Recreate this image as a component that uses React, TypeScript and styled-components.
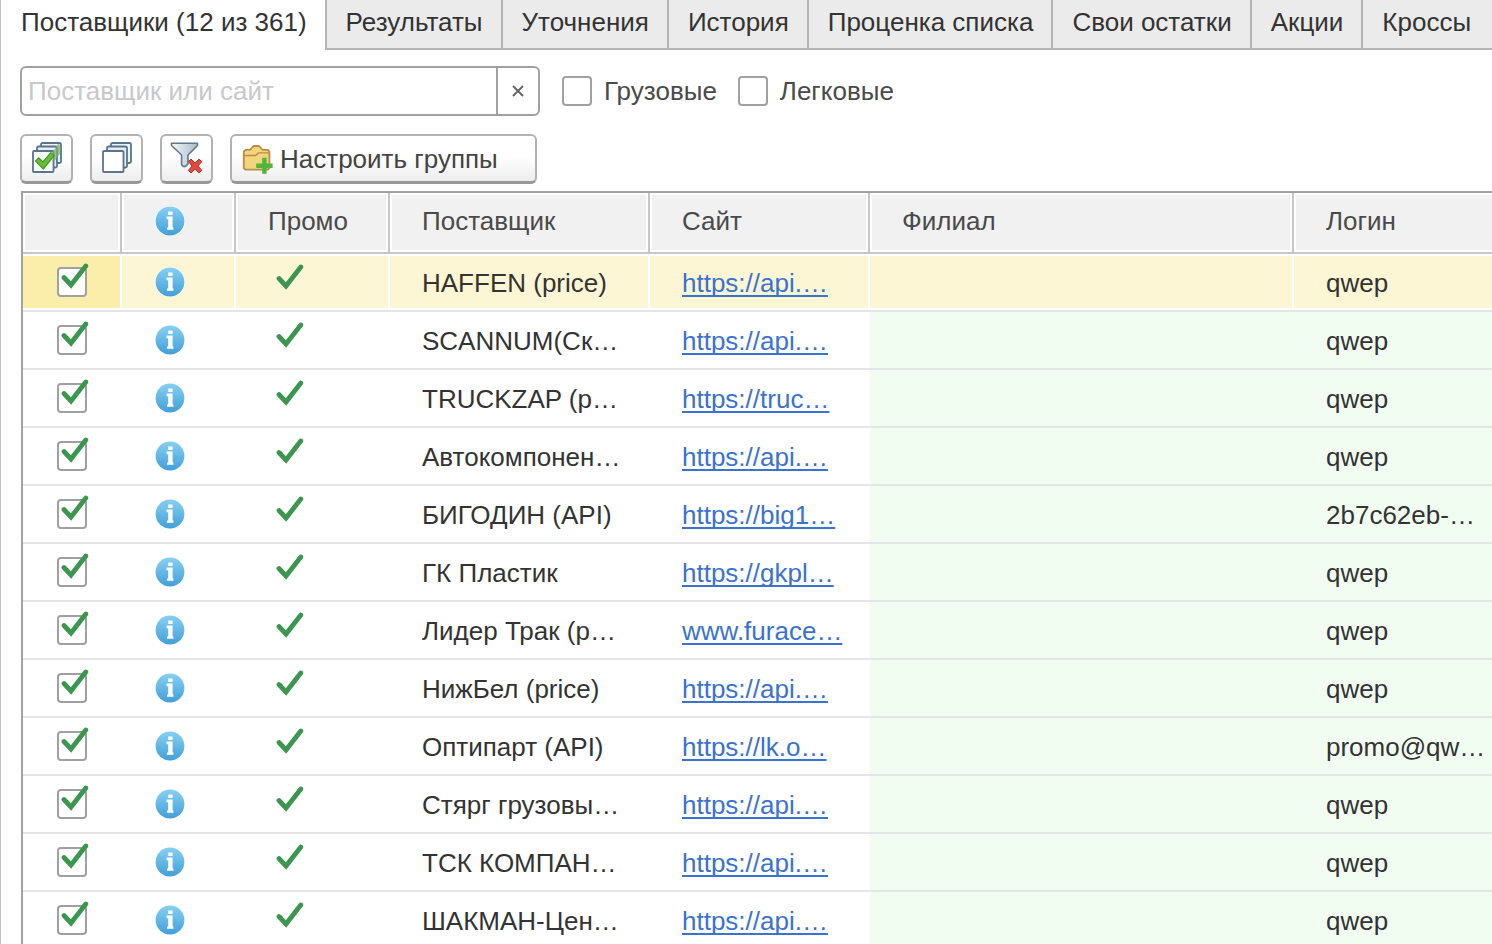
import React, { useState } from "react";
import styled, { createGlobalStyle, css } from "styled-components";

const GlobalStyle = createGlobalStyle`
  *, *::before, *::after { box-sizing: border-box; }
  body {
    margin: 0;
    height: 100vh;
    overflow: hidden;
    background: #fff;
    color: #333;
    font: 26px/32px "Liberation Sans", Arial, sans-serif;
  }
  button, input { font: inherit; color: inherit; }
`;

const Page = styled.main`
  height: 100vh;
  overflow: hidden;
  border-left: 1px solid #c4c4c4;
`;

const Tabs = styled.nav`
  display: flex;
  height: 50px;
  overflow: hidden;
`;

const Tab = styled.button<{ $active: boolean }>`
  flex: none;
  height: 50px;
  padding: 0 18px 4px 19px;
  border: 0 solid #b4b4b4;
  white-space: nowrap;
  text-align: left;
  background: #ebebeb;
  border-width: 0 0 2px 2px;
  &:last-child { flex: 1 0 auto; }
  ${(p) =>
    p.$active &&
    css`
      padding: 0 18px 6px 20px;
      background: #fff;
      border-width: 0;
    `}
`;

const Filters = styled.div`
  display: flex;
  align-items: center;
  padding: 16px 0 0 19px;
`;

const SearchBox = styled.div`
  display: flex;
  width: 520px;
  height: 50px;
  margin-right: 22px;
  border: 2px solid #a0a0a0;
  border-radius: 6px;
  background: #fff;
  overflow: hidden;
`;

const SearchInput = styled.input`
  flex: 1;
  min-width: 0;
  border: 0;
  padding: 0 6px;
  background: none;
  outline: none;
  &::placeholder { color: #c8c8cc; opacity: 1; }
`;

const ClearButton = styled.button`
  display: flex;
  align-items: center;
  justify-content: center;
  width: 42px;
  padding: 0;
  border: 0;
  border-left: 2px solid #a0a0a0;
  background: none;
`;

const CheckLabel = styled.label`
  display: flex;
  align-items: center;
  gap: 12px;
  margin-right: 21px;
  color: #4a4a4a;
`;

const Box = styled.input`
  appearance: none;
  display: block;
  width: 30px;
  height: 30px;
  margin: 0;
  border: 2px solid #a0a0a0;
  border-radius: 4px;
  background: #fff;
`;

const Toolbar = styled.div`
  display: flex;
  gap: 17px;
  padding: 18px 0 7px 19px;
`;

const ToolButton = styled.button<{ $wide?: boolean }>`
  display: flex;
  align-items: center;
  justify-content: ${(p) => (p.$wide ? "flex-start" : "center")};
  gap: 7px;
  width: ${(p) => (p.$wide ? 307 : 53)}px;
  height: 50px;
  padding: ${(p) => (p.$wide ? "0 10px" : "0 0 2px")};
  border: 2px solid #b2b2b2;
  border-bottom: 3px solid #989898;
  border-radius: 6px;
  background: linear-gradient(#fff 45%, #ededed);
  color: #444;
`;

const GridFrame = styled.div`
  margin-left: 20px;
  border: 2px solid #a2a2a2;
  border-width: 2px 0 0 2px;
`;

const Grid = styled.table`
  width: 100%;
  table-layout: fixed;
  border-collapse: separate;
  border-spacing: 0;
`;

const Col = styled.col<{ $width?: number }>`
  width: ${(p) => (p.$width ? `${p.$width}px` : "auto")};
`;

const HeadCell = styled.th<{ $center?: boolean }>`
  height: 61px;
  padding: ${(p) => (p.$center ? "0 0 4px" : "0 0 4px 32px")};
  border: 0 solid #c6c6c6;
  border-width: 0 2px 2px 0;
  box-shadow: inset 0 0 0 2px #fff;
  background: #f1f1f1;
  color: #4a4a4a;
  font-weight: normal;
  text-align: left;
  &:last-child {
    border-right-width: 0;
    box-shadow: inset 2px 2px #fff, inset 0 -2px #fff;
  }
`;

const Cell = styled.td<{ $tint?: boolean; $center?: boolean }>`
  height: 58px;
  padding: ${(p) => (p.$center ? "0" : "2px 0 0 32px")};
  border-bottom: 2px solid #e3e5e7;
  background: ${(p) => (p.$tint ? "#f2fdf1" : "#fff")};
  white-space: nowrap;
  overflow: hidden;
`;

const Row = styled.tr<{ $selected: boolean }>`
  ${(p) =>
    p.$selected &&
    css`
      ${Cell} {
        background: #fdf6d4;
        box-shadow: inset -2px 2px #fff, inset 0 -2px #fff;
      }
      ${Cell}:first-child { background: #faeeaa; }
      ${Cell}:last-child { box-shadow: inset 0 2px #fff, inset 0 -2px #fff; }
    `}
`;

const SiteLink = styled.a`
  color: #3a72d0;
  text-decoration: underline;
  text-decoration-thickness: 2px;
  text-underline-offset: 3px;
  text-decoration-skip-ink: none;
`;

const RowCheck = styled.label`
  position: relative;
  display: block;
  width: 30px;
  margin-left: 34px;
  svg {
    position: absolute;
    left: 4px;
    top: -4px;
    pointer-events: none;
  }
`;

const Mark = styled.span`
  display: block;
  padding: 0 0 10px 40px;
  svg { display: block; }
`;

const InfoMark = styled.span`
  display: block;
  padding-left: 33px;
  svg { display: block; }
`;

const Tick = () => (
  <svg width="28" height="27" viewBox="0 0 28 27" aria-hidden="true">
    <path d="M3 14.5 10 22 24.8 3" fill="none" stroke="#3d9650" strokeWidth="4.8" strokeLinecap="round" />
  </svg>
);

const InfoIcon = () => (
  <svg width="30" height="30" viewBox="0 0 30 30" aria-hidden="true">
    <defs>
      <linearGradient id="info" x1="0" y1="0" x2="0" y2="1">
        <stop offset="0" stopColor="#86d0f2" />
        <stop offset="1" stopColor="#429fd8" />
      </linearGradient>
    </defs>
    <circle cx="15" cy="15" r="15" fill="#fff" />
    <circle cx="15" cy="15" r="14.4" fill="url(#info)" />
    <path d="M13.2 5.5h4.4v3.6h-4.4zM11.6 10.6h6v10.8h.8v2.3h-6.400v-2.3h1.200v-8.100h-1.600z" fill="#fff" />
  </svg>
);

const Sheets = () => (
  <g stroke="#58758c" strokeWidth="1.8">
    <rect x="9" y="1" width="20" height="20" rx="1.5" fill="#eef3f6" />
    <rect x="5" y="4.5" width="20" height="21" rx="1.5" fill="#e6edf1" />
    <rect x="1" y="9" width="20.5" height="21" rx="1" fill="#fff" />
  </g>
);

const CheckAllIcon = () => (
  <svg width="30" height="31" viewBox="0 0 30 31" aria-hidden="true">
    <Sheets />
    <path d="M20 11 26 2l2.5 1v8L22 20z" fill="#7fae72" opacity=".75" />
    <path d="m3.5 19 3.4-3.2 4 4.2 8-9.4 3.4 2.8-11 13.6z" fill="#67bd35" stroke="#439b24" strokeWidth="1.2" strokeLinejoin="round" />
  </svg>
);

const UncheckAllIcon = () => (
  <svg width="30" height="31" viewBox="0 0 30 31" aria-hidden="true">
    <Sheets />
  </svg>
);

const ClearFilterIcon = () => (
  <svg width="33" height="32" viewBox="0 0 33 32" aria-hidden="true">
    <defs>
      <linearGradient id="funnel" x1="0" y1="0" x2="1" y2="0">
        <stop offset="0" stopColor="#f5f8fa" />
        <stop offset="1" stopColor="#a9bbc9" />
      </linearGradient>
    </defs>
    <path d="M1.5 1.2h26v2.3L18 13v9l-2.4 2.4h-2.4l-1.6-1.6V13L1.5 3.5z" fill="url(#funnel)" stroke="#60798c" strokeWidth="1.6" strokeLinejoin="round" />
    <path d="m18.4 19.6 2.6-2.4 4 3.6 4-3.6 2.8 2.4-3.8 4.4 3.8 4.4-2.8 2.6-4-3.8-4 3.8-2.6-2.6 3.6-4.4z" fill="#e04a3e" stroke="#b72d27" strokeWidth="1" strokeLinejoin="round" />
  </svg>
);

const FolderIcon = () => (
  <svg width="31" height="30" viewBox="0 0 31 30" aria-hidden="true">
    <path d="M1.8 11V7.5L3.6 5.8H8L11.5 2H17l3.6 3.8h5.2l1.6 1.8V24l-1.6 1.6H3.4L1.8 24z" fill="#f5d47e" stroke="#b98d47" strokeWidth="1.8" strokeLinejoin="round" />
    <path d="M2.5 11.5h11l3-2.6H27" fill="none" stroke="#b98d47" strokeWidth="1.4" />
    <path d="M20.2 13.8h4.4v5.8h6V24h-6v5.8h-4.4V24h-6v-4.4h6z" fill="#50b63a" />
  </svg>
);

const CrossIcon = () => (
  <svg width="12" height="12" viewBox="0 0 12 12" aria-hidden="true">
    <path d="M1 1l10 10M11 1 1 11" stroke="#666" strokeWidth="2" />
  </svg>
);

const tabs = [
  "Поставщики (12 из 361)",
  "Результаты",
  "Уточнения",
  "История",
  "Проценка списка",
  "Свои остатки",
  "Акции",
  "Кроссы",
];

const suppliers = [
  { name: "HAFFEN (price)", site: "https://api.…", login: "qwep" },
  { name: "SCANNUM(Ск…", site: "https://api.…", login: "qwep" },
  { name: "TRUCKZAP (p…", site: "https://truc…", login: "qwep" },
  { name: "Автокомпонен…", site: "https://api.…", login: "qwep" },
  { name: "БИГОДИН (API)", site: "https://big1…", login: "2b7c62eb-…" },
  { name: "ГК Пластик", site: "https://gkpl…", login: "qwep" },
  { name: "Лидер Трак (p…", site: "www.furace…", login: "qwep" },
  { name: "НижБел (price)", site: "https://api.…", login: "qwep" },
  { name: "Оптипарт (API)", site: "https://lk.o…", login: "promo@qw…" },
  { name: "Стярг грузовы…", site: "https://api.…", login: "qwep" },
  { name: "ТСК КОМПАН…", site: "https://api.…", login: "qwep" },
  { name: "ШАКМАН-Цен…", site: "https://api.…", login: "qwep" },
];

export default function App() {
  const [activeTab, setActiveTab] = useState(0);
  const [selected, setSelected] = useState(0);
  const [query, setQuery] = useState("");
  const [checked, setChecked] = useState(() => suppliers.map(() => true));

  const setAll = (value: boolean) => setChecked(suppliers.map(() => value));
  const toggle = (index: number) =>
    setChecked((prev) => prev.map((value, i) => (i === index ? !value : value)));

  return (
    <>
      <GlobalStyle />
      <Page>
        <Tabs>
          {tabs.map((title, i) => (
            <Tab key={title} type="button" $active={i === activeTab} onClick={() => setActiveTab(i)}>
              {title}
            </Tab>
          ))}
        </Tabs>

        <Filters>
          <SearchBox>
            <SearchInput
              type="text"
              aria-label="Поставщик или сайт"
              placeholder="Поставщик или сайт"
              value={query}
              onChange={(e) => setQuery(e.target.value)}
            />
            <ClearButton type="button" aria-label="Очистить" onClick={() => setQuery("")}>
              <CrossIcon />
            </ClearButton>
          </SearchBox>
          <CheckLabel>
            <Box type="checkbox" />
            Грузовые
          </CheckLabel>
          <CheckLabel>
            <Box type="checkbox" />
            Легковые
          </CheckLabel>
        </Filters>

        <Toolbar>
          <ToolButton type="button" aria-label="Отметить все" onClick={() => setAll(true)}>
            <CheckAllIcon />
          </ToolButton>
          <ToolButton type="button" aria-label="Снять отметки" onClick={() => setAll(false)}>
            <UncheckAllIcon />
          </ToolButton>
          <ToolButton type="button" aria-label="Сбросить фильтр" onClick={() => setQuery("")}>
            <ClearFilterIcon />
          </ToolButton>
          <ToolButton type="button" $wide>
            <FolderIcon />
            Настроить группы
          </ToolButton>
        </Toolbar>

        <GridFrame>
          <Grid>
            <colgroup>
              <Col $width={99} />
              <Col $width={114} />
              <Col $width={154} />
              <Col $width={260} />
              <Col $width={220} />
              <Col $width={424} />
              <Col />
            </colgroup>
            <thead>
              <tr>
                <HeadCell aria-label="Отметка" />
                <HeadCell aria-label="Информация" $center>
                  <InfoMark>
                    <InfoIcon />
                  </InfoMark>
                </HeadCell>
                <HeadCell>Промо</HeadCell>
                <HeadCell>Поставщик</HeadCell>
                <HeadCell>Сайт</HeadCell>
                <HeadCell>Филиал</HeadCell>
                <HeadCell>Логин</HeadCell>
              </tr>
            </thead>
            <tbody>
              {suppliers.map((s, i) => (
                <Row key={s.name} $selected={i === selected} onClick={() => setSelected(i)}>
                  <Cell $center>
                    <RowCheck>
                      <Box
                        type="checkbox"
                        aria-label={s.name}
                        checked={checked[i]}
                        onChange={() => toggle(i)}
                      />
                      {checked[i] && <Tick />}
                    </RowCheck>
                  </Cell>
                  <Cell $center>
                    <InfoMark>
                      <InfoIcon />
                    </InfoMark>
                  </Cell>
                  <Cell $center>
                    <Mark>
                      <Tick />
                    </Mark>
                  </Cell>
                  <Cell>{s.name}</Cell>
                  <Cell>
                    <SiteLink href="#">{s.site}</SiteLink>
                  </Cell>
                  <Cell $tint />
                  <Cell $tint>{s.login}</Cell>
                </Row>
              ))}
            </tbody>
          </Grid>
        </GridFrame>
      </Page>
    </>
  );
}
